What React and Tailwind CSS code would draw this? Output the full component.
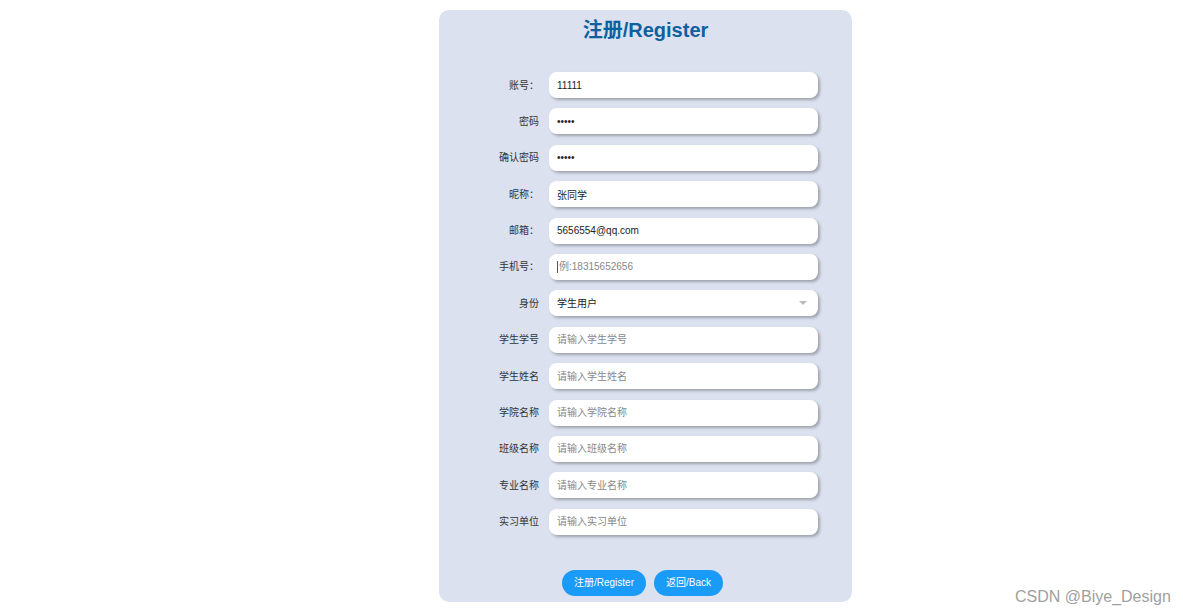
import React from 'react';

const rows = [
  { label: '账号：', value: '11111' },
  { label: '密码', value: '11111', type: 'password' },
  { label: '确认密码', value: '11111', type: 'password' },
  { label: '昵称：', value: '张同学' },
  { label: '邮箱：', value: '5656554@qq.com' },
  { label: '手机号：', placeholder: '例:18315652656', focused: true },
  { label: '身份', select: '学生用户' },
  { label: '学生学号', placeholder: '请输入学生学号' },
  { label: '学生姓名', placeholder: '请输入学生姓名' },
  { label: '学院名称', placeholder: '请输入学院名称' },
  { label: '班级名称', placeholder: '请输入班级名称' },
  { label: '专业名称', placeholder: '请输入专业名称' },
  { label: '实习单位', placeholder: '请输入实习单位' },
];

const font = "font-['Liberation_Sans','Noto_Sans_CJK_SC',sans-serif]";

function Field({ row }) {
  const box =
    'w-[269px] h-[26px] rounded-[8px] bg-white shadow-[2px_2px_3px_rgba(0,0,0,0.28)] flex items-center pl-[8px] pr-[8px] text-[10px] text-[#222]';
  if (row.select) {
    return (
      <div className={box + ' justify-between'}>
        <span>{row.select}</span>
        <span className="w-0 h-0 border-l-[4px] border-r-[4px] border-t-[4px] border-l-transparent border-r-transparent border-t-[#bbb] mr-[3px]" />
      </div>
    );
  }
  if (row.focused) {
    return (
      <div className={box + ' relative'}>
        <span className="w-px h-[12px] bg-[#555] mr-[1px]" />
        <span className="text-[#888]">{row.placeholder}</span>
      </div>
    );
  }
  return (
    <input
      type={row.type || 'text'}
      defaultValue={row.value}
      placeholder={row.placeholder}
      readOnly
      className={box + ' outline-none placeholder:text-[#888] ' + font}
    />
  );
}

export default function App() {
  return (
    <div className={`relative w-full h-[616px] bg-white overflow-hidden ${font}`}>
      <div className="ml-[439px] mt-[10px] w-[413px] h-[592px] rounded-[10px] bg-[#dbe1ef] flex flex-col">
        <h1 className="text-center text-[20px] font-bold text-[#0d619f] leading-none mt-[10px]">
          注册/Register
        </h1>
        <div className="flex flex-col gap-[10.4px] mt-[32px]">
          {rows.map((row) => (
            <div key={row.label} className="flex items-center">
              <label className="w-[100px] text-right text-[10px] text-[#333] pr-0">
                {row.label}
              </label>
              <div className="ml-[10px]">
                <Field row={row} />
              </div>
            </div>
          ))}
        </div>
        <div className="flex justify-center gap-[8px] mt-[35px] pr-[6px]">
          <button className="h-[26px] w-[84px] rounded-full bg-[#1a9bf7] text-white text-[10px]">
            注册/Register
          </button>
          <button className="h-[26px] w-[69px] rounded-full bg-[#1a9bf7] text-white text-[10px]">
            返回/Back
          </button>
        </div>
      </div>
      <div className="absolute left-[1015px] top-[589px] text-[16px] text-[#a0a0a0] leading-none">
        CSDN @Biye_Design
      </div>
    </div>
  );
}
